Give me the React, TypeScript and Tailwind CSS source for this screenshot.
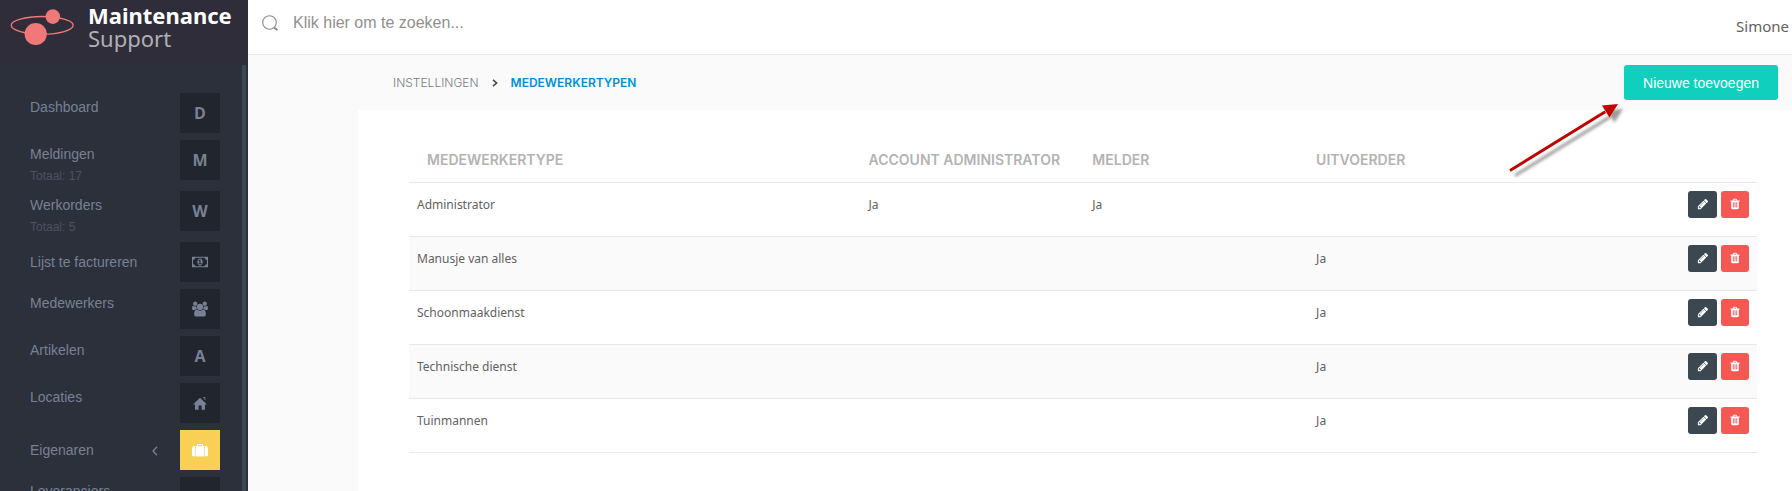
import React from "react";

const UI = "font-['Liberation_Sans',sans-serif]";

function Glyph({ d, box, className }: { d: string; box: string; className: string }) {
  return (
    <svg viewBox={box} className={className} fill="currentColor" aria-hidden="true">
      <path d={d} />
    </svg>
  );
}

const PENCIL =
  "M491 1536l91-91-235-235-91 91v107h128v128h107zm523-928q0-22-22-22-10 0-17 7l-542 542q-7 7-7 17 0 22 22 22 10 0 17-7l542-542q7-7 7-17zm-54-192l416 416-832 832h-416v-416zm683 96q0 53-37 90l-166 166-416-416 166-165q36-38 90-38 53 0 91 38l235 234q37 39 37 91z";
const TRASH =
  "M704 1376v-704q0-14-9-23t-23-9h-64q-14 0-23 9t-9 23v704q0 14 9 23t23 9h64q14 0 23-9t9-23zm256 0v-704q0-14-9-23t-23-9h-64q-14 0-23 9t-9 23v704q0 14 9 23t23 9h64q14 0 23-9t9-23zm256 0v-704q0-14-9-23t-23-9h-64q-14 0-23 9t-9 23v704q0 14 9 23t23 9h64q14 0 23-9t9-23zm-544-992h448l-48-117q-7-9-17-11h-317q-10 2-17 11zm928 32v64q0 14-9 23t-23 9h-96v948q0 83-47 143.5t-113 60.5h-832q-66 0-113-58.5t-47-141.5v-952h-96q-14 0-23-9t-9-23v-64q0-14 9-23t23-9h309l70-167q15-37 54-63t79-26h320q40 0 79 26t54 63l70 167h309q14 0 23 9t9 23z";
const SUITCASE =
  "M3 2.2V12.5H2Q0 12.5 0 10.5V4.2Q0 2.2 2 2.2ZM3.6 2.2H4.8V1.2Q4.8 0 6 0H10Q11.2 0 11.2 1.2V2.2H12.4V12.5H3.6ZM6 2.2H10V1.2H6ZM13 2.2H14Q16 2.2 16 4.2V10.5Q16 12.5 14 12.5H13Z";
const MONEY =
  "M768 1152h384v-96h-128v-448h-114l-148 137 77 80q42-37 55-57h2v288h-128v96zm512-256q0 70-21 142t-59.5 134-101.5 101-138 39-138-39-101.5-101-59.5-134-21-142 21-142 59.5-134 101.5-101 138-39 138 39 101.5 101 59.5 134 21 142zm512 256v-512q-106 0-181-75t-75-181h-1152q0 106-75 181t-181 75v512q106 0 181 75t75 181h1152q0-106 75-181t181-75zm128-832v1152q0 26-19 45t-45 19h-1792q-26 0-45-19t-19-45v-1152q0-26 19-45t45-19h1792q26 0 45 19t19 45z";
const USERS =
  "M593 896q-162 5-265 128h-134q-82 0-138-40.5t-56-118.5q0-353 124-353 6 0 43.5 21t97.5 42.5 119 21.5q67 0 133-23-5 37-5 66 0 139 81 256zm1071 637q0 120-73 189.5t-194 69.5h-874q-121 0-194-69.5t-73-189.5q0-53 3.5-103.5t14-109 26.5-108.5 43-97.5 62-81 85.5-53.5 111.5-20q10 0 43 21.5t73 48 107 48 135 21.5 135-21.5 107-48 73-48 43-21.5q61 0 111.5 20t85.5 53.5 62 81 43 97.5 26.5 108.5 14 109 3.5 103.5zm-1024-1277q0 106-75 181t-181 75-181-75-75-181 75-181 181-75 181 75 75 181zm704 384q0 159-112.5 271.5t-271.5 112.5-271.5-112.5-112.5-271.5 112.5-271.5 271.5-112.5 271.5 112.5 112.5 271.5zm576 225q0 78-56 118.5t-138 40.5h-134q-103-123-265-128 81-117 81-256 0-29-5-66 66 23 133 23 59 0 119-21.5t97.5-42.5 43.5-21q124 0 124 353zm-128-609q0 106-75 181t-181 75-181-75-75-181 75-181 181-75 181 75 75 181z";
const HOME = "M7 0.8 14 7.5H12V12.8H8.6V8.6H5.6V12.8H2V7.5H0ZM9.8 0.2H12.4V3.2L11.4 2.2V1.2H10.4Z";

type Item = {
  label: string;
  detail?: string;
  icon: React.ReactNode;
  centered?: boolean;
  expandable?: boolean;
  active?: boolean;
};

const items: Item[] = [
  { label: "Dashboard", icon: "D" },
  { label: "Meldingen", detail: "Totaal: 17", icon: "M" },
  { label: "Werkorders", detail: "Totaal: 5", icon: "W" },
  { label: "Lijst te factureren", centered: true, icon: <Glyph d={MONEY} box="0 0 1920 1792" className="h-4 w-4" /> },
  { label: "Medewerkers", icon: <Glyph d={USERS} box="0 0 1920 1792" className="h-4 w-4" /> },
  { label: "Artikelen", icon: "A" },
  { label: "Locaties", icon: <Glyph d={HOME} box="0 0 14 13" className="h-[13px] w-[14px]" /> },
  {
    label: "Eigenaren",
    centered: true,
    expandable: true,
    active: true,
    icon: <Glyph d={SUITCASE} box="0 0 16 13" className="h-[13px] w-4" />,
  },
  { label: "Leveranciers", icon: "" },
];

function Sidebar() {
  return (
    <aside className="flex w-[248px] shrink-0 flex-col bg-[#2b303b]">
      <div className="flex h-[65px] shrink-0 items-start bg-[#302d3a] pl-[10px]">
        <svg viewBox="0 0 66 38" className="mt-[9px] h-[38px] w-[66px]" aria-hidden="true">
          <ellipse cx="32.2" cy="16.3" rx="31" ry="8.8" fill="none" stroke="#f07878" strokeWidth="1.3" />
          <circle cx="42.8" cy="7.6" r="7.3" fill="#f07878" />
          <circle cx="25.7" cy="25" r="11.1" fill="#f07878" />
        </svg>
        <div className="ml-3 mt-1 font-['Noto_Sans',sans-serif] text-[22px] leading-[23px]">
          <div className="font-bold text-white">Maintenance</div>
          <div className="text-[#b0b0b4]">Support</div>
        </div>
      </div>
      <div className="flex min-h-0 flex-1 overflow-hidden pr-[2px]">
        <nav className="flex-1 pl-[30px] pr-[22px] pt-7">
          <ul>
            {items.map((it) => (
              <li key={it.label} className={it.detail ? "h-[51px]" : "h-[47px]"}>
                <a href="#" className="flex h-10 items-start">
                  <span className={it.centered ? "flex-1 pt-[10px]" : "flex-1 pt-1"}>
                    <span className="block text-sm leading-5 text-[#788195]">{it.label}</span>
                    {it.detail && <span className="block pt-0.5 text-xs leading-5 text-[#4b5263]">{it.detail}</span>}
                  </span>
                  {it.expandable && (
                    <svg viewBox="0 0 6 10" className="mr-[22px] mt-4 h-[10px] w-[6px]" fill="none" stroke="#788195" strokeWidth="1.3" aria-hidden="true">
                      <path d="M5 0.8 1 5 5 9.2" />
                    </svg>
                  )}
                  <span
                    className={
                      it.active
                        ? "flex size-10 items-center justify-center bg-[#f8d053] text-white"
                        : "flex size-10 items-center justify-center bg-[#21252d] text-base font-bold text-[#788195] font-['Open_Sans',sans-serif]"
                    }
                  >
                    {it.icon}
                  </span>
                </a>
              </li>
            ))}
          </ul>
        </nav>
        <div className="w-1 bg-[#3b4751]" />
      </div>
    </aside>
  );
}

function PointerArrow() {
  return (
    <svg viewBox="0 0 130 84" className="pointer-events-none absolute right-[162px] top-[100px] h-[84px] w-[130px]" aria-hidden="true">
      <defs>
        <filter id="soft" x="-20%" y="-20%" width="140%" height="140%">
          <feDropShadow dx="5" dy="5" stdDeviation="1.8" floodColor="#000" floodOpacity="0.4" />
        </filter>
      </defs>
      <g filter="url(#soft)" fill="#c00000">
        <path d="M9.3 69.2 104.5 10.5 106 13 10.7 71.8Z" />
        <path d="M118 4 102 5.5 109.5 17.5Z" />
      </g>
    </svg>
  );
}

const rows = [
  ["Administrator", "Ja", "Ja", ""],
  ["Manusje van alles", "", "", "Ja"],
  ["Schoonmaakdienst", "", "", "Ja"],
  ["Technische dienst", "", "", "Ja"],
  ["Tuinmannen", "", "", "Ja"],
];

function TypeTable() {
  return (
    <table className="w-full table-fixed border-collapse text-left">
      <thead>
        <tr className="h-12 border-b border-[#e8e8e8] font-['Inter',sans-serif] text-sm text-[#b3b3b3]">
          <th className="w-[33.5%] pl-[18px] pt-1 font-semibold">MEDEWERKERTYPE</th>
          <th className="w-[16.6%] whitespace-nowrap pl-2 pt-1 font-semibold">ACCOUNT ADMINISTRATOR</th>
          <th className="w-[16.6%] pl-2 pt-1 font-semibold">MELDER</th>
          <th className="pl-2 pt-1 font-semibold">UITVOERDER</th>
          <th className="w-[80px]" aria-label="Acties" />
        </tr>
      </thead>
      <tbody>
        {rows.map((cells) => (
          <tr key={cells[0]} className="h-[54px] border-b border-[#e8e8e8] align-top text-xs text-[#626262] even:bg-[#fafafa]">
            {cells.map((c, i) => (
              <td key={i} className="px-2 pt-3 leading-5 font-['Noto_Sans',sans-serif]">
                {c}
              </td>
            ))}
            <td className="pr-2 pt-2">
              <div className="flex justify-end gap-1">
                <button type="button" aria-label="Bewerken" className="flex h-[27px] w-[29px] items-center justify-center rounded-[3px] bg-[#3b4751] text-white">
                  <Glyph d={PENCIL} box="0 0 1792 1792" className="size-3" />
                </button>
                <button type="button" aria-label="Verwijderen" className="flex h-[27px] w-7 items-center justify-center rounded-[3px] bg-[#f55753] text-white">
                  <Glyph d={TRASH} box="0 0 1792 1792" className="size-3" />
                </button>
              </div>
            </td>
          </tr>
        ))}
      </tbody>
    </table>
  );
}

export default function App() {
  return (
    <div className={`flex h-screen overflow-hidden bg-[#fafafa] ${UI}`}>
      <Sidebar />
      <div className="relative flex min-w-0 flex-1 flex-col">
        <header className="flex h-[55px] shrink-0 items-center justify-between border-b border-[#e8e8e8] bg-white pl-[14px] pr-[3px]">
          <label className="flex flex-1 items-center gap-[14px] pb-2">
            <svg viewBox="0 0 17 17" className="size-[17px]" fill="none" stroke="#8a8a8a" aria-hidden="true">
              <circle cx="7.5" cy="7.5" r="6.8" strokeWidth="1.1" />
              <path d="M12.3 12.8 15.5 15" strokeWidth="2" />
            </svg>
            <input
              type="text"
              aria-label="Zoeken"
              placeholder="Klik hier om te zoeken..."
              className="w-80 bg-transparent text-base leading-6 outline-none placeholder:text-[#8f8f8f]"
            />
          </label>
          <span className="pb-0.5 font-['Noto_Sans',sans-serif] text-[15px] text-[#626262]">Simone</span>
        </header>
        <div className="flex h-[55px] shrink-0 items-center justify-between pl-[145px] pr-[14px]">
          <nav aria-label="Kruimelpad" className="flex items-center font-['Inter',sans-serif] text-xs">
            <a href="#" className="font-light text-[#7b7d82]">INSTELLINGEN</a>
            <svg viewBox="0 0 6 8" className="mx-[13px] h-2 w-[6px]" fill="none" stroke="#444" strokeWidth="1.6" aria-hidden="true">
              <path d="M1 0.8 4.6 4 1 7.2" />
            </svg>
            <a href="#" className="font-semibold text-[#0090d9]">MEDEWERKERTYPEN</a>
          </nav>
          <button type="button" className="h-[35px] rounded-[3px] bg-[#10cfbd] px-[19px] text-sm text-white">
            Nieuwe toevoegen
          </button>
        </div>
        <main className="ml-[110px] flex-1 bg-white pl-[51px] pr-[35px] pt-6">
          <TypeTable />
        </main>
        <PointerArrow />
      </div>
    </div>
  );
}
